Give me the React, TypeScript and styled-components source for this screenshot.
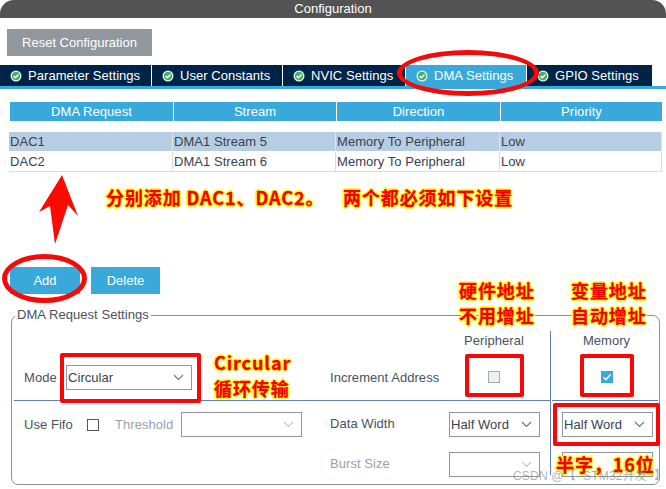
import styled, { createGlobalStyle } from "styled-components";

const GlobalStyle = createGlobalStyle`
  html, body {
    margin: 0;
    background: #fff;
    overflow: hidden;
  }
  body {
    font-family: "Liberation Sans", Arial, sans-serif;
    font-size: 13px;
    letter-spacing: 0.05px;
  }
`;

const Page = styled.div`
  position: relative;
  width: 666px;
  height: 489px;
  overflow: hidden;
  background: #fff;
`;

const TitleBar = styled.header`
  height: 18px;
  line-height: 17px;
  text-align: center;
  color: #fff;
  background: #525352;
  border-radius: 14px 14px 0 0;
  letter-spacing: 0;
`;

const Toolbar = styled.div`
  padding: 11px 0 9px 7px;
`;

const ResetButton = styled.button`
  display: block;
  width: 145px;
  height: 27px;
  padding: 0;
  border: 0;
  font: inherit;
  color: #fff;
  background: #90979d;
`;

const TabBar = styled.nav`
  display: flex;
  height: 21px;
  border-bottom: 3px solid #39a9db;
`;

const Tab = styled.div<{ $width: number; $active?: boolean }>`
  display: flex;
  align-items: center;
  gap: 6px;
  box-sizing: border-box;
  width: ${(p) => p.$width}px;
  padding-left: 10px;
  color: #fff;
  background: ${(p) => (p.$active ? "#39a9db" : "#002448")};
  border-right: 1px solid #fff;
  &:last-child {
    border-right: 0;
  }
`;

const Table = styled.section`
  margin: 13px 4px 0 9px;
`;

const TableRow = styled.div`
  display: grid;
  grid-template-columns: 164px 163px 164px 162px;
`;

const HeadRow = styled(TableRow)`
  margin-bottom: 11px;
`;

const HeadCell = styled.div`
  height: 19px;
  line-height: 19px;
  margin-left: 1px;
  text-align: center;
  color: #fff;
  background: #39a9db;
`;

const BodyCell = styled.div<{ $selected?: boolean }>`
  box-sizing: border-box;
  height: 20px;
  line-height: 19px;
  padding-left: 1px;
  color: #3a4150;
  background: ${(p) => (p.$selected ? "#b6cde4" : "#fff")};
  border-bottom: 1px solid ${(p) => (p.$selected ? "#fff" : "#dcdcdc")};
  border-right: 1px solid ${(p) => (p.$selected ? "#dfe5ea" : "#dcdcdc")};
`;

const Actions = styled.div`
  display: flex;
  gap: 11px;
  margin: 95px 0 0 10px;
`;

const ActionButton = styled.button<{ $width: number }>`
  width: ${(p) => p.$width}px;
  height: 27px;
  padding: 0;
  border: 0;
  font: inherit;
  color: #fff;
  background: #39a9db;
`;

const Settings = styled.fieldset`
  box-sizing: border-box;
  width: 649px;
  height: 177px;
  margin: 14px 0 0 11px;
  padding: 0;
  border: 1px solid #8b9196;
  border-radius: 7px;
`;

const Legend = styled.legend`
  margin-left: 3px;
  padding: 0 2px;
  line-height: 14px;
  color: #4a5260;
`;

const SettingsGrid = styled.div`
  display: grid;
  grid-template-columns: 318px 119px 101px 108px;
  grid-template-rows: 34px 36px 46px 28px;
  margin-top: 9px;
  color: #4a5260;
`;

const Cell = styled.div<{ $ruled?: boolean }>`
  display: flex;
  align-items: center;
  border-bottom: ${(p) => (p.$ruled ? "1px solid #5f7fbf" : "0")};
`;

const ModeCell = styled(Cell)`
  grid-row: 1 / span 2;
  align-items: flex-end;
  margin-left: 2px;
  padding: 0 0 10px 10px;
`;

const FifoCell = styled(Cell)`
  grid-row: 3 / span 2;
  align-items: flex-start;
  padding: 11px 0 0 12px;
`;

const FieldRow = styled.div`
  display: flex;
  align-items: center;
  height: 25px;
`;

const HeadingCell = styled(Cell)`
  align-items: flex-start;
  justify-content: center;
  padding: 2px 11px 0 0;
`;

const MemoryHead = styled(HeadingCell)`
  padding: 2px 0 0 4px;
  border-left: 1px solid #5f7fbf;
`;

const AddressCell = styled(Cell)`
  padding-bottom: 11px;
`;

const PeripheralCell = styled(AddressCell)`
  justify-content: center;
  padding-right: 11px;
`;

// the rule under this cell stops 2px short of the vertical line
const MemoryCheck = styled(Cell)`
  justify-content: center;
  padding: 0 0 12px 5px;
  border-left: 1px solid #5f7fbf;
  background: linear-gradient(#5f7fbf, #5f7fbf) 1px 100% / 100% 1px no-repeat;
`;

const SelectCell = styled.div<{ $top: number; $memory?: boolean }>`
  padding-top: ${(p) => p.$top}px;
  padding-left: ${(p) => (p.$memory ? 11 : 0)}px;
  border-left: ${(p) => (p.$memory ? "1px solid #5f7fbf" : "0")};
`;

const RowLabelCell = styled.div<{ $top: number }>`
  padding-top: ${(p) => p.$top}px;
  line-height: 14px;
`;

const FieldLabel = styled.span<{ $muted?: boolean; $width?: number }>`
  flex: none;
  white-space: nowrap;
  width: ${(p) => (p.$width ? `${p.$width}px` : "auto")};
  color: ${(p) => (p.$muted ? "#9ba0ab" : "#4a5260")};
`;

const ThresholdLabel = styled(FieldLabel)`
  box-sizing: border-box;
  padding-left: 16px;
`;

const Select = styled.div<{ $width: number; $disabled?: boolean }>`
  display: flex;
  align-items: center;
  justify-content: space-between;
  box-sizing: border-box;
  flex: none;
  width: ${(p) => p.$width}px;
  height: 25px;
  padding: 0 7px 0 1px;
  border: 1px solid #90969b;
  color: #3a4150;
  background: #fff;
  svg {
    stroke: ${(p) => (p.$disabled ? "#c4c7cb" : "#6d7278")};
  }
`;

const Check = styled.span<{ $checked?: boolean; $plain?: boolean }>`
  display: flex;
  align-items: center;
  justify-content: center;
  box-sizing: border-box;
  width: 12px;
  height: 12px;
  flex: none;
  border: 1px solid ${(p) => (p.$checked ? "#39a9db" : p.$plain ? "#55595e" : "#a5a8ad")};
  background: ${(p) => (p.$checked ? "#39a9db" : p.$plain ? "#fff" : "#eff0f2")};
`;

const Overlay = styled.div<{ $x: number; $y: number; $w: number; $h: number }>`
  position: absolute;
  box-sizing: border-box;
  left: ${(p) => p.$x}px;
  top: ${(p) => p.$y}px;
  width: ${(p) => p.$w}px;
  height: ${(p) => p.$h}px;
  pointer-events: none;
`;

const RedBox = styled(Overlay)`
  border: 4px solid #fb0606;
  border-radius: 2px;
`;

const RedEllipse = styled(Overlay)`
  border: 5px solid #f50a0a;
  border-radius: 50%;
`;

const Note = styled.div<{ $x: number; $y: number }>`
  position: absolute;
  left: ${(p) => p.$x}px;
  top: ${(p) => p.$y}px;
  font-family: "Noto Sans CJK SC", "Liberation Sans", sans-serif;
  font-size: 18px;
  font-weight: 700;
  line-height: 25px;
  letter-spacing: 0.9px;
  white-space: pre;
  color: #f40000;
  -webkit-text-stroke: 0.3px #f40000;
  text-shadow:
    2px 0 #ffff30, -2px 0 #ffff30, 0 2px #ffff30, 0 -2px #ffff30,
    1px 1px #ffff30, -1px 1px #ffff30, 1px -1px #ffff30, -1px -1px #ffff30;
`;

const Watermark = styled.div`
  position: absolute;
  left: 513px;
  top: 468px;
  font-family: "Liberation Sans", "Noto Sans CJK SC", sans-serif;
  font-size: 12px;
  line-height: 16px;
  letter-spacing: 0.2px;
  white-space: pre;
  color: rgba(120, 125, 130, 0.6);
`;

const TabIcon = () => (
  <svg width="12" height="12" viewBox="0 0 12 12">
    <circle cx="6" cy="6" r="5.5" fill="#e6f4ea" />
    <circle cx="6" cy="6" r="4.2" fill="#3fae68" />
    <path d="M3.6 6.1 5.3 7.8 8.5 4.5" fill="none" stroke="#fff" strokeWidth="1.5" />
  </svg>
);

const Chevron = () => (
  <svg width="11" height="7" viewBox="0 0 11 7" fill="none" strokeWidth="1.1">
    <path d="M1 1 5.5 5.5 10 1" />
  </svg>
);

const CheckMark = () => (
  <svg width="10" height="10" viewBox="0 0 10 10">
    <path d="M1.5 5.2 4 7.6 8.6 2.6" fill="none" stroke="#fff" strokeWidth="1.5" />
  </svg>
);

const tabs = [
  { label: "Parameter Settings", width: 152 },
  { label: "User Constants", width: 131 },
  { label: "NVIC Settings", width: 123 },
  { label: "DMA Settings", width: 121, active: true },
  { label: "GPIO Settings", width: 125 },
];

const columns = ["DMA Request", "Stream", "Direction", "Priority"];

const rows = [
  ["DAC1", "DMA1 Stream 5", "Memory To Peripheral", "Low"],
  ["DAC2", "DMA1 Stream 6", "Memory To Peripheral", "Low"],
];

const App = () => {
  return (
    <Page>
      <GlobalStyle />
      <TitleBar>Configuration</TitleBar>
      <Toolbar>
        <ResetButton>Reset Configuration</ResetButton>
      </Toolbar>
      <TabBar>
        {tabs.map((t) => (
          <Tab key={t.label} $width={t.width} $active={t.active}>
            <TabIcon />
            {t.label}
          </Tab>
        ))}
      </TabBar>
      <Table>
        <HeadRow>
          {columns.map((c) => (
            <HeadCell key={c}>{c}</HeadCell>
          ))}
        </HeadRow>
        {rows.map((r, i) => (
          <TableRow key={r[0]}>
            {r.map((v) => (
              <BodyCell key={v + i} $selected={i === 0}>
                {v}
              </BodyCell>
            ))}
          </TableRow>
        ))}
      </Table>
      <Actions>
        <ActionButton $width={70}>Add</ActionButton>
        <ActionButton $width={69}>Delete</ActionButton>
      </Actions>
      <Settings>
        <Legend>DMA Request Settings</Legend>
        <SettingsGrid>
          <ModeCell $ruled>
            <FieldRow>
              <FieldLabel $width={42}>Mode</FieldLabel>
              <Select $width={126}>
                Circular
                <Chevron />
              </Select>
            </FieldRow>
          </ModeCell>
          <Cell />
          <HeadingCell>
            <FieldLabel>Peripheral</FieldLabel>
          </HeadingCell>
          <MemoryHead>
            <FieldLabel>Memory</FieldLabel>
          </MemoryHead>

          <AddressCell $ruled>
            <FieldLabel>Increment Address</FieldLabel>
          </AddressCell>
          <PeripheralCell $ruled>
            <Check />
          </PeripheralCell>
          <MemoryCheck>
            <Check $checked>
              <CheckMark />
            </Check>
          </MemoryCheck>

          <FifoCell>
            <FieldRow>
              <FieldLabel $width={63}>Use Fifo</FieldLabel>
              <Check $plain />
              <ThresholdLabel $muted $width={82}>
                Threshold
              </ThresholdLabel>
              <Select $width={121} $disabled>
                <span />
                <Chevron />
              </Select>
            </FieldRow>
          </FifoCell>
          <RowLabelCell $top={16}>
            <FieldLabel>Data Width</FieldLabel>
          </RowLabelCell>
          <SelectCell $top={11}>
            <Select $width={91}>
              Half Word
              <Chevron />
            </Select>
          </SelectCell>
          <SelectCell $top={11} $memory>
            <Select $width={91}>
              Half Word
              <Chevron />
            </Select>
          </SelectCell>

          <RowLabelCell $top={10}>
            <FieldLabel $muted>Burst Size</FieldLabel>
          </RowLabelCell>
          <SelectCell $top={5}>
            <Select $width={91} $disabled>
              <span />
              <Chevron />
            </Select>
          </SelectCell>
          <SelectCell $top={5} $memory>
            <Select $width={91} $disabled />
          </SelectCell>
        </SettingsGrid>
      </Settings>

      <RedEllipse $x={397} $y={50} $w={142} $h={46} />
      <RedEllipse $x={2} $y={254} $w={85} $h={49} />
      <RedBox $x={60} $y={353} $w={141} $h={50} />
      <RedBox $x={465} $y={354} $w={59} $h={43} />
      <RedBox $x={580} $y={354} $w={54} $h={43} />
      <RedBox $x={553} $y={403} $w={107} $h={43} />

      <Overlay $x={35} $y={170} $w={50} $h={80}>
        <svg width="50" height="80" viewBox="0 0 50 80">
          <path d="M27 5 43 46 33 35 20 74 15 36 4 42Z" fill="#fb0a00" />
        </svg>
      </Overlay>

      <Note $x={106} $y={185}>分别添加 DAC1、DAC2。</Note>
      <Note $x={343} $y={185}>两个都必须如下设置</Note>
      <Note $x={214} $y={350}>Circular</Note>
      <Note $x={214} $y={376}>循环传输</Note>
      <Note $x={459} $y={278}>硬件地址</Note>
      <Note $x={459} $y={303}>不用增址</Note>
      <Note $x={571} $y={278}>变量地址</Note>
      <Note $x={571} $y={303}>自动增址</Note>
      <Note $x={556} $y={452}>半字，16位</Note>
      <Watermark>CSDN @【  STM32开发  】</Watermark>
    </Page>
  );
};

export default App;
